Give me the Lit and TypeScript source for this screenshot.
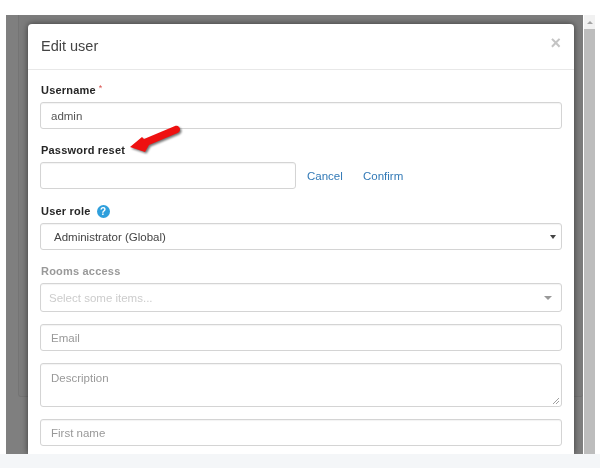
import { LitElement, html, css } from "lit";
import { customElement } from "lit/decorators.js";

@customElement("app-root")
export class AppRoot extends LitElement {
  static styles = css`
    :host { display: block; width: 600px; height: 468px; background: #fff; overflow: hidden; position: relative; font-family: "Liberation Sans", Arial, sans-serif; }
    * { box-sizing: border-box; }
    .stage { display: flex; height: 454px; padding: 15px 5px 0 6px; gap: 1px; filter: blur(0.35px); }
    .backdrop { position: relative; flex: 1; background: #7f7f7f; padding: 9px 9px 0 22px; overflow: hidden; }
    .under { position: absolute; left: 12px; top: 0; right: 0; height: 382px; border: 1px solid #747474; border-top: 0; border-right: 0; background: #7c7c7c; border-radius: 0 0 3px 3px; }
    .modal { position: relative; height: 100%; background: #fff; border-radius: 4px 4px 0 0; box-shadow: 0 0 6px rgba(0,0,0,.55); }
    .head { height: 46px; border-bottom: 1px solid #e8e8e8; padding: 0 13px; display: flex; align-items: center; justify-content: space-between; }
    .title { font-size: 14.5px; color: #444; margin-top: -2px; }
    .close { font-size: 18px; font-weight: bold; color: #c4c4c4; margin-top: -6px; }
    .body { padding: 13px 12px 0; display: flex; flex-direction: column; }
    label { display: flex; align-items: center; font-size: 11px; font-weight: bold; color: #262626; letter-spacing: .2px; height: 14px; margin-bottom: 5px; padding-left: 1px; }
    .muted { color: #999; }
    .req { color: #d9534f; font-size: 9px; font-weight: normal; margin: -5px 0 0 3px; }
    .field { height: 27px; border: 1px solid #d4d4d4; border-radius: 3px; display: flex; align-items: center; padding: 0 10px; font-size: 11.5px; color: #555; background: #fff; box-shadow: inset 0 1px 1px rgba(0,0,0,.05); }
    .ph { color: #999; }
    .mb { margin-bottom: 14px; }
    .mb2 { margin-bottom: 12px; }
    .row { display: flex; align-items: center; margin-bottom: 15px; }
    .row .field { width: 256px; }
    a { color: #337ab7; font-size: 11.5px; }
    .cancel { margin-left: 11px; width: 56px; }
    .help { width: 13px; height: 13px; border-radius: 50%; background: #2f9fdc; color: #fff; font-size: 10px; font-weight: bold; display: flex; align-items: center; justify-content: center; margin-left: 6px; letter-spacing: 0; }
    .select { justify-content: space-between; padding: 0 5px 0 13px; color: #444; }
    .caret { width: 0; height: 0; border-left: 3px solid transparent; border-right: 3px solid transparent; border-top: 4px solid #444; }
    .rooms { height: 29px; justify-content: space-between; padding: 0 9px 0 8px; color: #ccc; }
    .caret2 { width: 0; height: 0; border-left: 4px solid transparent; border-right: 4px solid transparent; border-top: 4px solid #999; }
    .area { height: 44px; align-items: flex-start; padding-top: 8px; position: relative; }
    .grip { position: absolute; right: 1px; bottom: 1px; }
    .bar { width: 11px; display: flex; flex-direction: column; background: #f1f1f1; }
    .up { height: 14px; display: flex; align-items: center; justify-content: center; }
    .up i { width: 0; height: 0; border-left: 3px solid transparent; border-right: 3px solid transparent; border-bottom: 3px solid #a3a3a3; }
    .thumb { flex: 1; background: #bdbdbd; }
    .foot { height: 14px; background: #f4f6f8; }
    .arrow { position: absolute; left: 128px; top: 124px; }
    .shadow { filter: blur(0.8px); }
  `;
  render() {
    return html`
      <div class="stage">
        <div class="backdrop">
          <div class="under"></div>
          <div class="modal">
            <div class="head"><span class="title">Edit user</span><span class="close">×</span></div>
            <div class="body">
              <label>Username<span class="req">*</span></label>
              <div class="field mb">admin</div>
              <label>Password reset</label>
              <div class="row"><div class="field"></div><a class="cancel">Cancel</a><a>Confirm</a></div>
              <label>User role<span class="help">?</span></label>
              <div class="field select mb"><span>Administrator (Global)</span><span class="caret"></span></div>
              <label class="muted">Rooms access</label>
              <div class="field rooms mb2"><span>Select some items...</span><span class="caret2"></span></div>
              <div class="field ph mb2">Email</div>
              <div class="field area ph mb2">Description
                <svg class="grip" width="8" height="8" viewBox="0 0 8 8"><path d="M1 7L7 1M4 7L7 4" stroke="#888" stroke-width=".8" fill="none"/></svg>
              </div>
              <div class="field ph">First name</div>
            </div>
          </div>
        </div>
        <div class="bar"><div class="up"><i></i></div><div class="thumb"></div></div>
      </div>
      <div class="foot"></div>
      <svg class="arrow" width="58" height="34" viewBox="0 0 58 34">
        <path class="shadow" d="M2 23L14 13L16 15L47 2C49.500 1 52.500 3.500 52 6C51.500 8 50.500 8.500 49 9.300L21 21L17 28Z" fill="#000" opacity=".55" transform="translate(1.500 1.500)"/>
        <path d="M2 23L14 13L16 15L47 2C49.500 1 52.500 3.500 52 6C51.500 8 50.500 8.500 49 9.300L21 21L17 28Z" fill="#ee1111"/>
      </svg>
    `;
  }
}
